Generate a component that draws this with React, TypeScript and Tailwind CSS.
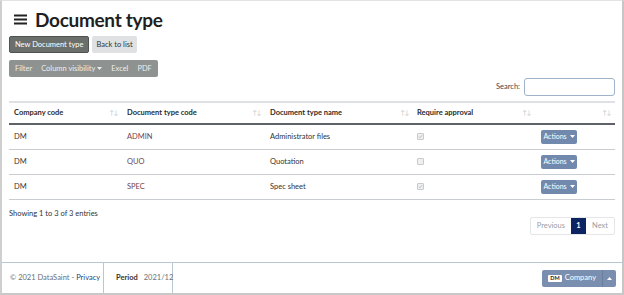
import React from 'react';

const rows = [
  { company: 'DM', code: 'ADMIN', name: 'Administrator files', approval: true },
  { company: 'DM', code: 'QUO', name: 'Quotation', approval: false },
  { company: 'DM', code: 'SPEC', name: 'Spec sheet', approval: true },
];

function SortIcon() {
  return <span className="text-[6.5px] tracking-[-0.5px] text-[#c2c6ca]">↑↓</span>;
}

function Caret({ className = '' }: { className?: string }) {
  return (
    <svg width="5" height="3" viewBox="0 0 5 3" className={className}>
      <path d="M0 0 L5 0 L2.5 3 Z" fill="currentColor" />
    </svg>
  );
}

function Checkbox({ checked }: { checked: boolean }) {
  return (
    <span className="flex h-[7px] w-[7px] items-center justify-center rounded-[1px] border border-[#c8cbce] bg-[#eef0f2]">
      {checked && (
        <svg width="5" height="5" viewBox="0 0 5 5">
          <path d="M0.8 2.6 L2 3.8 L4.2 1.2" stroke="#b5b9bd" strokeWidth="0.9" fill="none" />
        </svg>
      )}
    </span>
  );
}

export default function App() {
  return (
    <div
      className="flex h-[295px] w-[624px] flex-col border-t border-l-2 border-r-2 border-b-2 border-t-[#e3e3e3] border-l-[#cfcfcf] border-r-[#c6c6c6] border-b-[#c8c8c8] bg-white text-[#333]"
      style={{ fontFamily: 'Lato, "Noto Sans", sans-serif' }}
    >
      <div className="flex-1 px-[7px]">
        {/* Title */}
        <div className="flex h-[34px] items-center gap-[7px] pl-[5px] pt-[3px]">
          <svg width="14" height="11" viewBox="0 0 14 11">
            <rect x="0" y="0.5" width="13" height="2" fill="#222" />
            <rect x="0" y="4.5" width="13" height="2" fill="#222" />
            <rect x="0" y="8.5" width="13" height="2" fill="#222" />
          </svg>
          <h1 className="text-[19px] font-bold leading-none tracking-[-0.3px] text-[#1f1f1f]">Document type</h1>
        </div>

        {/* Action buttons */}
        <div className="mt-[1px] flex gap-[3px]">
          <button className="h-[17px] rounded-[2px] border border-[#4f534f] bg-[#6b6f6b] px-[5px] text-[7.5px] leading-none text-white">
            New Document type
          </button>
          <button className="h-[17px] rounded-[2px] bg-[#dfe1e3] px-[4px] text-[7.5px] leading-none text-[#333]">
            Back to list
          </button>
        </div>

        {/* Toolbar */}
        <div className="mt-[7px] flex h-[17px] w-fit items-center rounded-[2px] bg-[#8e9290] text-[7.5px] leading-none text-[#eceeed]">
          <span className="pl-[6px] pr-[5px]">Filter</span>
          <span className="flex items-center gap-[2px] px-[4px]">
            Column visibility <Caret />
          </span>
          <span className="px-[5px]">Excel</span>
          <span className="pl-[4px] pr-[6px]">PDF</span>
        </div>

        {/* Search */}
        <div className="mt-[1px] flex items-center justify-end gap-[4px]">
          <span className="text-[7.5px] text-[#444]">Search:</span>
          <div className="h-[18px] w-[91px] rounded-[3px] border border-[#9fb3c8] bg-white" />
        </div>

        {/* Table */}
        <table className="mt-[5px] w-[606px] border-collapse text-[7.5px]">
          <thead>
            <tr className="h-[22px] border-t-2 border-b-2 border-t-[#dee2e6] border-b-[#5f6266] text-left font-bold text-[#2b2b2b]">
              <th className="w-[113px] pl-[5px]">
                <div className="flex items-center justify-between pr-[4px]">
                  Company code <span className="font-normal"><SortIcon /></span>
                </div>
              </th>
              <th className="w-[143px] pl-[5px]">
                <div className="flex items-center justify-between pr-[4px]">
                  Document type code <span className="font-normal"><SortIcon /></span>
                </div>
              </th>
              <th className="w-[148px] pl-[5px]">
                <div className="flex items-center justify-between pr-[4px]">
                  Document type name <span className="font-normal"><SortIcon /></span>
                </div>
              </th>
              <th className="w-[122px] pl-[4px]">
                <div className="flex items-center justify-between pr-[4px]">
                  Require approval <span className="font-normal"><SortIcon /></span>
                </div>
              </th>
              <th className="pr-[4px] text-right font-normal">
                <SortIcon />
              </th>
            </tr>
          </thead>
          <tbody>
            {rows.map((r) => (
              <tr key={r.code} className="h-[25px] border-b border-[#c9cdd1] text-[#3a3a3a]">
                <td className="pl-[5px] text-[#333]">{r.company}</td>
                <td className="pl-[5px] text-[#6e4450]">{r.code}</td>
                <td className="pl-[5px] text-[#333]">{r.name}</td>
                <td className="pl-[4px]">
                  <Checkbox checked={r.approval} />
                </td>
                <td className="pl-[6px]">
                  <button className="flex h-[14px] w-[36px] items-center justify-center gap-[3px] rounded-[2px] bg-[#7189ad] text-[7px] leading-none text-white">
                    Actions <Caret />
                  </button>
                </td>
              </tr>
            ))}
          </tbody>
        </table>

        {/* Info + pagination */}
        <div className="mt-[8px] text-[7.5px] text-[#333]">Showing 1 to 3 of 3 entries</div>
        <div className="-mt-[2px] flex justify-end">
          <div className="flex h-[18px] items-stretch overflow-hidden rounded-[2px] border border-[#e4e6e8] text-[7.5px] leading-none">
            <span className="flex items-center px-[6px] text-[#9a9ea2]">Previous</span>
            <span className="flex w-[15px] items-center justify-center bg-[#0c2461] font-bold text-white">1</span>
            <span className="flex items-center px-[6px] text-[#9a9ea2]">Next</span>
          </div>
        </div>
      </div>

      {/* Footer */}
      <div className="flex h-[31px] items-stretch border-t border-[#b7c7d6] text-[7.5px]">
        <div className="flex w-[102px] items-center border-r border-[#b7c7d6] pl-[8px] text-[#6b6f73]">
          © 2021 DataSaint - <span className="ml-[2px] text-[#1f3f78]">Privacy</span>
        </div>
        <div className="flex w-[69px] items-center gap-[6px] border-r border-[#b7c7d6] pl-[12px]">
          <span className="font-bold text-[#333]">Period</span>
          <span className="text-[#6b6f73]">2021/12</span>
        </div>
        <div className="flex flex-1 items-center justify-end pr-[6px]">
          <div className="flex h-[17px] overflow-hidden rounded-[2px] bg-[#7a8fb0] text-white">
            <div className="flex items-center gap-[3px] pl-[6px] pr-[6px]">
              <span className="rounded-[1px] bg-white px-[2px] text-[5.5px] font-bold leading-[7px] text-[#222]">DM</span>
              <span className="text-[7.5px]">Company</span>
            </div>
            <div className="flex w-[14px] items-center justify-center border-l border-[#6a7fa0]">
              <Caret className="rotate-180" />
            </div>
          </div>
        </div>
      </div>
    </div>
  );
}
